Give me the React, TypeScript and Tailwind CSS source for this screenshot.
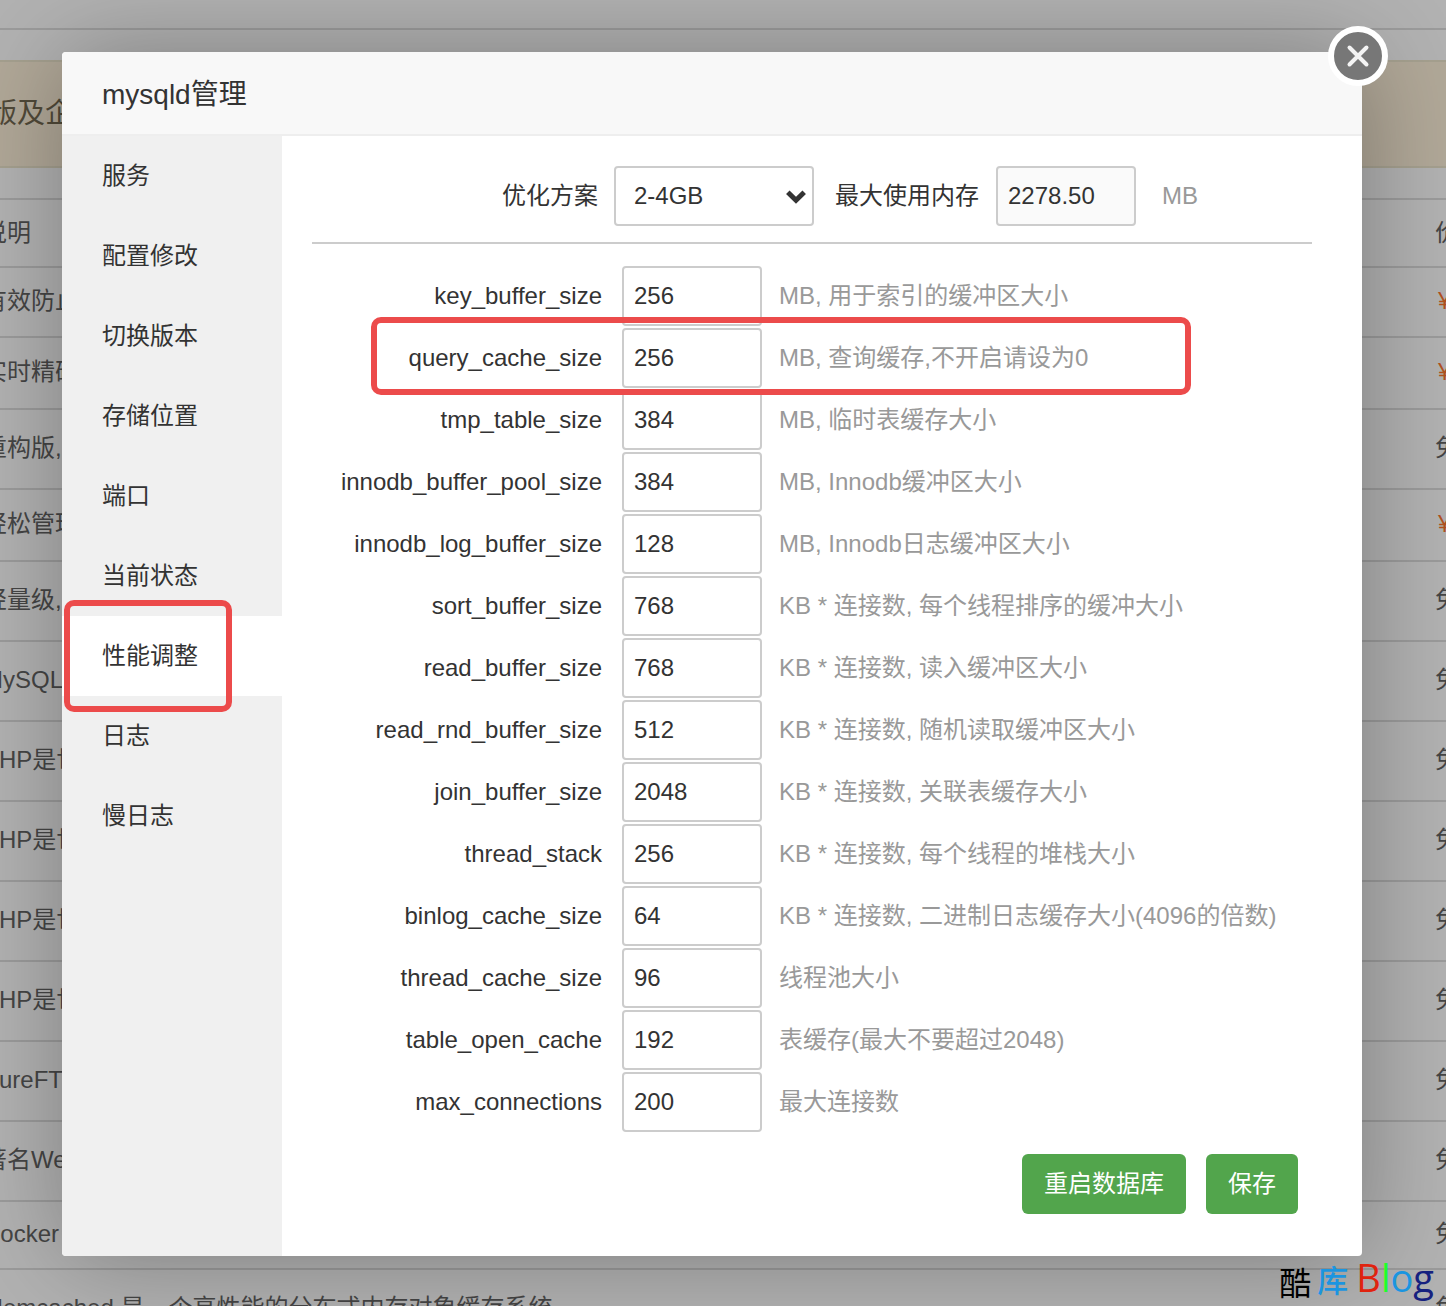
import { useState } from "react";
import clsx from "clsx";

const tabs = [
  "服务",
  "配置修改",
  "切换版本",
  "存储位置",
  "端口",
  "当前状态",
  "性能调整",
  "日志",
  "慢日志",
];

const fields = [
  { name: "key_buffer_size", value: "256", hint: "MB, 用于索引的缓冲区大小" },
  { name: "query_cache_size", value: "256", hint: "MB, 查询缓存,不开启请设为0", marked: true },
  { name: "tmp_table_size", value: "384", hint: "MB, 临时表缓存大小" },
  { name: "innodb_buffer_pool_size", value: "384", hint: "MB, Innodb缓冲区大小" },
  { name: "innodb_log_buffer_size", value: "128", hint: "MB, Innodb日志缓冲区大小" },
  { name: "sort_buffer_size", value: "768", hint: "KB * 连接数, 每个线程排序的缓冲大小" },
  { name: "read_buffer_size", value: "768", hint: "KB * 连接数, 读入缓冲区大小" },
  { name: "read_rnd_buffer_size", value: "512", hint: "KB * 连接数, 随机读取缓冲区大小" },
  { name: "join_buffer_size", value: "2048", hint: "KB * 连接数, 关联表缓存大小" },
  { name: "thread_stack", value: "256", hint: "KB * 连接数, 每个线程的堆栈大小" },
  { name: "binlog_cache_size", value: "64", hint: "KB * 连接数, 二进制日志缓存大小(4096的倍数)" },
  { name: "thread_cache_size", value: "96", hint: "线程池大小" },
  { name: "table_open_cache", value: "192", hint: "表缓存(最大不要超过2048)" },
  { name: "max_connections", value: "200", hint: "最大连接数" },
];

const plugins = [
  { text: "有效防止", price: "¥", height: "h-[70px]" },
  { text: "实时精确", price: "¥", height: "h-[72px]" },
  { text: "重构版,", price: "免费", height: "h-20" },
  { text: "轻松管理", price: "¥", height: "h-[72px]" },
  { text: "轻量级,", price: "免费", height: "h-20" },
  { text: "MySQL", price: "免费", height: "h-20" },
  { text: "PHP是世", price: "免费", height: "h-20" },
  { text: "PHP是世", price: "免费", height: "h-20" },
  { text: "PHP是世", price: "免费", height: "h-20" },
  { text: "PHP是世", price: "免费", height: "h-20" },
  { text: "PureFT", price: "免费", height: "h-20" },
  { text: "著名We", price: "免费", height: "h-20" },
  { text: "Docker", price: "免费", height: "h-[68px]" },
  { text: "Memcached 是一个高性能的分布式内存对象缓存系统", price: "免费", height: "h-20" },
];

function PluginList() {
  return (
    <div className="absolute inset-0 overflow-hidden bg-[#b2b2b2] text-[#454545]">
      <div className="h-[30px] border-b-2 border-[#9b9b9b]" />
      <div className="-mx-[11px] mt-[30px] flex h-[108px] items-center border-y-2 border-[#a5a08f] bg-[#b1a898] text-[28px] text-[#504938]">
        版及企
      </div>
      <div className="-mr-10 -ml-[17px] mt-[30px]">
        <table className="w-full table-fixed border-collapse text-left">
          <thead>
            <tr className="h-[68px] border-y-2 border-[#9b9b9b]">
              <th className="p-0 font-normal">说明</th>
              <th className="w-[51px] p-0 font-normal">价格</th>
            </tr>
          </thead>
          <tbody>
            {plugins.map((p, i) => (
              <tr key={i} className={clsx("border-b-2 border-[#9b9b9b]", p.height)}>
                <td className="p-0 pb-0.5 whitespace-nowrap">{p.text}</td>
                <td className={clsx("p-0 pb-0.5", p.price === "¥" && "pl-[3px] text-[#b1521f]")}>{p.price}</td>
              </tr>
            ))}
          </tbody>
        </table>
      </div>
    </div>
  );
}

function CloseButton() {
  return (
    <button
      type="button"
      aria-label="关闭"
      className="absolute -top-[26px] -right-[26px] z-10 flex size-[60px] items-center justify-center rounded-full border-6 border-white bg-[#777]"
    >
      <svg width="28" height="28" viewBox="0 0 28 28" fill="none" stroke="#f4f4f4" strokeWidth="4" strokeLinecap="round">
        <path d="M5.5 5.5 22.5 22.5M22.5 5.5 5.5 22.5" />
      </svg>
    </button>
  );
}

function Sidebar({ active, onSelect }: { active: string; onSelect: (tab: string) => void }) {
  return (
    <nav className="w-[220px] shrink-0 rounded-bl-sm bg-[#f0f0f0]">
      {tabs.map((tab) => (
        <div key={tab} className="relative">
          <button
            type="button"
            onClick={() => onSelect(tab)}
            className={clsx("block h-20 w-full pl-10 text-left", tab === active && "bg-white")}
          >
            {tab}
          </button>
          {tab === "性能调整" && (
            <span className="pointer-events-none absolute -top-4 left-0.5 z-10 h-28 w-[168px] rounded-[10px] border-6 border-[#ec4b4b]" />
          )}
        </div>
      ))}
    </nav>
  );
}

function TuningForm() {
  return (
    <form className="min-w-0 flex-1 pt-[30px] pr-[50px] pb-[42px] pl-[30px]" onSubmit={(e) => e.preventDefault()}>
      <div className="flex items-center border-b-2 border-[#ccc] pb-4 pl-[190px]">
        <label htmlFor="plan" className="mr-4 whitespace-nowrap">优化方案</label>
        <div className="relative">
          <select
            id="plan"
            defaultValue="2-4GB"
            className="block h-[60px] w-[200px] appearance-none rounded-sm border-2 border-[#ccc] bg-white pl-[18px]"
          >
            <option>1-2GB</option>
            <option>2-4GB</option>
            <option>4-8GB</option>
            <option>8-16GB</option>
            <option>16-32GB</option>
          </select>
          <svg
            className="pointer-events-none absolute top-5 right-1.5"
            width="24"
            height="20"
            viewBox="0 0 24 20"
            fill="none"
            stroke="#333"
            strokeWidth="5"
          >
            <path d="M3.8 6.2 12 14.2 20.2 6.2" />
          </svg>
        </div>
        <label htmlFor="memory" className="mr-[17px] ml-[21px] whitespace-nowrap">最大使用内存</label>
        <input
          id="memory"
          readOnly
          value="2278.50"
          className="h-[60px] w-[140px] rounded-sm border-2 border-[#ccc] bg-[#fafafa] pl-2.5"
        />
        <span className="ml-[26px] text-[#999]">MB</span>
      </div>

      <div className="mt-[22px] flex flex-col gap-0.5">
        {fields.map((f) => (
          <div key={f.name} className="relative flex items-center">
            <label htmlFor={f.name} className="w-[290px] shrink-0 text-right">{f.name}</label>
            <input
              id={f.name}
              defaultValue={f.value}
              className="ml-5 h-[60px] w-[140px] rounded-sm border-2 border-[#ccc] bg-white pl-2.5"
            />
            <span className="ml-[17px] whitespace-nowrap text-[#999]">{f.hint}</span>
            {f.marked && (
              <span className="pointer-events-none absolute -top-[11px] left-[59px] z-10 h-[78px] w-[820px] rounded-[10px] border-6 border-[#ec4b4b]" />
            )}
          </div>
        ))}
      </div>

      <div className="mt-[22px] mr-3.5 flex justify-end gap-5 text-white">
        <button type="button" className="h-[60px] rounded-md bg-[#52a54c] px-[22px]">重启数据库</button>
        <button type="submit" className="h-[60px] rounded-md bg-[#52a54c] px-[22px]">保存</button>
      </div>
    </form>
  );
}

function Watermark() {
  return (
    <div className="pointer-events-none absolute right-3 bottom-0 z-10 flex h-12 items-start leading-none">
      <span className="mt-2.5 mr-1.5 text-[32px] text-black">酷</span>
      <span className="mt-2 mr-2 text-[31px] font-medium text-[#1b95e0]">库</span>
      <span className="font-['Open_Sans',sans-serif] text-[38px]">
        <span className="text-[#e0230f]">B</span>
        <span className="text-[#1cff2b]">l</span>
        <span className="text-[#1b95e0]">o</span>
        <span className="text-[#16217f]">g</span>
      </span>
    </div>
  );
}

export default function App() {
  const [active, setActive] = useState("性能调整");

  return (
    <div className="relative min-h-screen overflow-hidden font-['Liberation_Sans','Noto_Sans_CJK_SC',sans-serif] text-2xl text-[#333]">
      <PluginList />
      <main className="relative pt-[52px] pr-[84px] pb-[50px] pl-[62px]">
        <section
          role="dialog"
          aria-label="mysqld管理"
          className="relative rounded-sm bg-white shadow-[2px_2px_100px_rgba(0,0,0,0.3)]"
        >
          <CloseButton />
          <h1 className="flex h-[84px] items-center rounded-t-sm border-b-2 border-[#eee] bg-[#f8f8f8] pt-1 pl-10 text-[28px]">
            mysqld管理
          </h1>
          <div className="flex">
            <Sidebar active={active} onSelect={setActive} />
            <TuningForm />
          </div>
        </section>
      </main>
      <Watermark />
    </div>
  );
}
